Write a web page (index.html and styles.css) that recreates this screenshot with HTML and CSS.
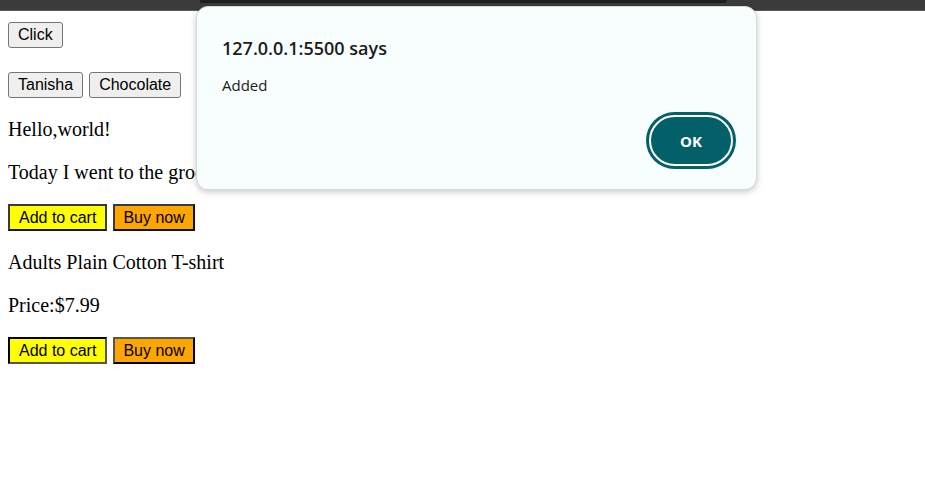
FILE: index.html
```html
<!DOCTYPE html>
<html>
<head>
<meta charset="utf-8">
<title>Page</title>
<link rel="stylesheet" href="styles.css">
</head>
<body>
<div class="topbar"><div class="tabshade"></div></div>
<main class="page">
  <div class="row row-first">
    <button class="plain">Click</button>
  </div>
  <div class="row row-second">
    <button class="plain">Tanisha</button>
    <button class="plain">Chocolate</button>
  </div>
  <p class="text">Hello,world!</p>
  <p class="text">Today I went to the grocery store</p>
  <div class="row row-shop">
    <button class="cart">Add to cart</button>
    <button class="buy">Buy now</button>
  </div>
  <p class="text">Adults Plain Cotton T-shirt</p>
  <p class="text">Price:$7.99</p>
  <div class="row row-shop">
    <button class="cart pressed">Add to cart</button>
    <button class="buy raised">Buy now</button>
  </div>
</main>
<div class="dialog" role="alertdialog">
  <div class="dialog-title">127.0.0.1:5500 says</div>
  <div class="dialog-msg">Added</div>
  <div class="dialog-actions">
    <button class="ok">OK</button>
  </div>
</div>
</body>
</html>
```

FILE: styles.css
```css
html, body {
  margin: 0;
  padding: 0;
  background: #ffffff;
}
body {
  font-family: "Liberation Serif", "Times New Roman", serif;
  color: #000;
  position: relative;
  min-height: 499px;
}
.topbar {
  height: 10px;
  background: #3b3b3b;
  border-bottom: 1px solid #5c5c5c;
  position: relative;
}
.tabshade {
  position: absolute;
  left: 200px;
  top: 0;
  width: 527px;
  height: 3px;
  background: #1f1f1f;
  border-bottom-right-radius: 4px;
}
.page {
  padding: 0 8px;
  display: flex;
  flex-direction: column;
  align-items: flex-start;
}
.row {
  display: flex;
  gap: 6px;
}
.row-first {
  margin-top: 11px;
}
.row-second {
  margin-top: 24px;
}
.text {
  font-size: 20px;
  line-height: 23px;
  margin: 20px 0 0 0;
}
.row-shop {
  margin-top: 20px;
}
button {
  font-family: "Liberation Sans", Arial, sans-serif;
  font-size: 16px;
  color: #000;
  margin: 0;
  cursor: default;
}
.plain {
  line-height: 18px;
  padding: 3px 9px;
  border: 1px solid #767676;
  border-radius: 3px;
  background: #efefef;
}
.cart, .buy {
  line-height: 19px;
  padding: 2px 9px;
  border: 2px solid #3a3a3a;
  border-bottom-color: #111;
  border-radius: 0;
}
.cart {
  background: #ffff00;
}
.buy {
  background: #ffa500;
  padding: 2px 8px;
  border-right-color: #111;
}
.cart.pressed {
  border-color: #000 #555 #555 #000;
}
.buy.raised {
  border-color: #555 #000 #000 #555;
}
.dialog {
  position: absolute;
  left: 196px;
  top: 6px;
  width: 561px;
  height: 184px;
  box-sizing: border-box;
  background: #f8fefe;
  border: 1px solid #d3dbdb;
  border-radius: 12px;
  box-shadow: 0 2px 6px rgba(0, 0, 0, 0.22);
  padding: 29px 22px 0 25px;
  display: flex;
  flex-direction: column;
  font-family: "Open Sans", "Noto Sans", sans-serif;
  color: #1b1b1b;
}
.dialog-title {
  font-size: 18px;
  line-height: 24px;
  font-weight: 600;
}
.dialog-msg {
  font-size: 15px;
  line-height: 20px;
  margin-top: 15px;
}
.dialog-actions {
  display: flex;
  justify-content: flex-end;
  margin-top: 20px;
}
.ok {
  width: 84px;
  height: 51px;
  box-sizing: border-box;
  margin-right: 1px;
  border: 2px solid #ffffff;
  border-radius: 999px;
  background: #046068;
  box-shadow: 0 0 0 3px #046068;
  color: #ffffff;
  font-family: "Open Sans", "Noto Sans", sans-serif;
  font-size: 15px;
  font-weight: 700;
  padding: 0;
}
```
